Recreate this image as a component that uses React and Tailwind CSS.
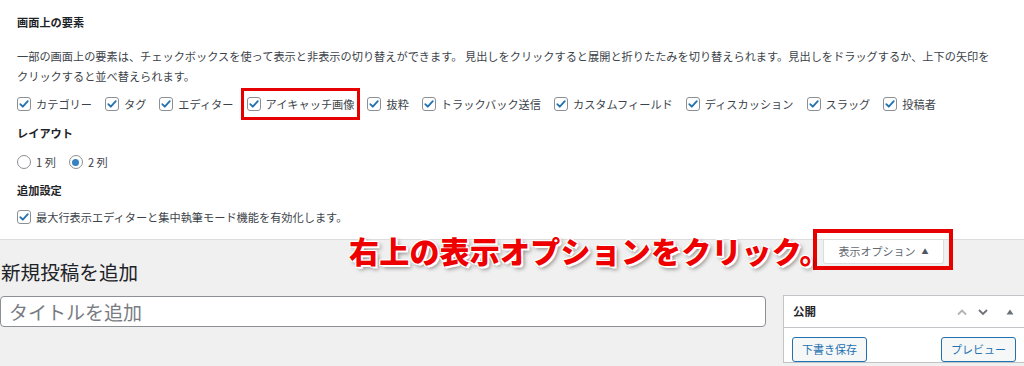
import React from "react";

function Check() {
  return (
    <span className="w-[14px] h-[14px] shrink-0 rounded-[3px] border border-[#8c8f94] bg-white flex items-center justify-center">
      <svg width="12" height="12" viewBox="0 0 12 12">
        <path d="M2.3 6.1 L4.8 8.7 L9.8 3.1" fill="none" stroke="#2271b1" strokeWidth="1.8" strokeLinecap="round" strokeLinejoin="round" />
      </svg>
    </span>
  );
}

function Radio({ on }) {
  return (
    <span className="w-[14px] h-[14px] shrink-0 rounded-full border border-[#8c8f94] bg-white flex items-center justify-center">
      {on && <span className="w-[7px] h-[7px] rounded-full bg-[#3582c4]" />}
    </span>
  );
}

const items = [
  "カテゴリー",
  "タグ",
  "エディター",
  "アイキャッチ画像",
  "抜粋",
  "トラックバック送信",
  "カスタムフィールド",
  "ディスカッション",
  "スラッグ",
  "投稿者",
];

export default function App() {
  return (
    <div className="relative w-[1024px] h-[366px] overflow-hidden bg-[#f0f0f1] font-['Noto_Sans_CJK_JP','Liberation_Sans',sans-serif]">
      <div className="bg-white h-[240px] border-b border-[#dcdcde] px-[17px] pt-[12px] text-[11.2px] text-[#3c434a]">
        <h5 className="leading-[20px] font-bold text-[#1d2327]">画面上の要素</h5>
        <p className="mt-[14px] leading-[20px] whitespace-nowrap">
          一部の画面上の要素は、チェックボックスを使って表示と非表示の切り替えができます。 見出しをクリックすると展開と折りたたみを切り替えられます。見出しをドラッグするか、上下の矢印を
          <br />
          クリックすると並べ替えられます。
        </p>
        <div className="mt-[8px] flex gap-[13px] leading-[20px] whitespace-nowrap">
          {items.map((t) => (
            <label key={t} className="relative flex items-center gap-[5px]">
              <Check />
              <span>{t}</span>
              {t === "アイキャッチ画像" && (
                <span className="absolute -inset-[6px] border-[3px] border-[#e60000] pointer-events-none" />
              )}
            </label>
          ))}
        </div>
        <h5 className="mt-[9px] leading-[20px] font-bold text-[#1d2327]">レイアウト</h5>
        <div className="mt-[9px] flex gap-[13px] leading-[20px]">
          <label className="flex items-center gap-[5px]">
            <Radio />
            <span>1 列</span>
          </label>
          <label className="flex items-center gap-[5px]">
            <Radio on />
            <span>2 列</span>
          </label>
        </div>
        <h5 className="mt-[8px] leading-[20px] font-bold text-[#1d2327]">追加設定</h5>
        <label className="mt-[7px] flex items-center gap-[5px] leading-[20px]">
          <Check />
          <span>最大行表示エディターと集中執筆モード機能を有効化します。</span>
        </label>
      </div>

      <div className="flex items-start justify-between pr-[80px]">
        <h1 className="pt-[22px] pl-[1px] leading-[20px] text-[19.6px] text-[#1d2327] font-normal">新規投稿を追加</h1>
        <div className="relative">
          <div className="h-[24px] w-[121px] bg-white border border-t-0 border-[#dcdcde] rounded-b-[3px] text-[11px] text-[#646970] flex items-center justify-center gap-[6px]">
            <span>表示オプション</span>
            <span className="text-[7px] text-[#50575e]">▲</span>
          </div>
          <span className="absolute left-[-10px] right-[-9px] top-[-11px] bottom-[-6px] border-[4px] border-[#e60000] pointer-events-none" />
        </div>
      </div>

      <div className="mt-[14px] flex gap-[17px]">
        <input
          className="w-[766px] h-[31px] shrink-0 bg-white border border-[#8c8f94] rounded-[4px] px-[8px] text-[19px] text-[#1d2327] placeholder:text-[#787c82] outline-none"
          placeholder="タイトルを追加"
        />
        <div className="w-[243px] shrink-0 -mt-[1px] bg-white border border-[#c3c4c7]">
          <div className="h-[32px] border-b border-[#c3c4c7] flex items-center pl-[9px] pr-[3px]">
            <span className="font-bold text-[11.5px] text-[#1d2327]">公開</span>
            <div className="ml-auto flex items-center">
              <span className="w-[20px] h-[20px] mr-[1px] flex items-center justify-center">
                <svg width="12" height="12" viewBox="0 0 12 12">
                  <polyline points="2,8.5 6,4.5 10,8.5" fill="none" stroke="#b0b3b7" strokeWidth="1.8" />
                </svg>
              </span>
              <span className="w-[20px] h-[20px] mr-[5px] flex items-center justify-center">
                <svg width="12" height="12" viewBox="0 0 12 12">
                  <polyline points="2,4 6,8 10,4" fill="none" stroke="#6d7278" strokeWidth="1.8" />
                </svg>
              </span>
              <span className="w-[24px] h-[20px] flex items-center justify-center">
                <svg width="8" height="6" viewBox="0 0 8 6">
                  <polygon points="4,0.5 7.5,5.5 0.5,5.5" fill="#6d7278" />
                </svg>
              </span>
            </div>
          </div>
          <div className="pl-[8px] pr-[9px] pt-[9px] flex justify-between text-[11px] text-[#2271b1]">
            <span className="h-[25px] w-[75px] border border-[#2271b1] rounded-[3px] bg-[#f6f7f7] flex items-center justify-center">下書き保存</span>
            <span className="h-[25px] w-[75px] border border-[#2271b1] rounded-[3px] bg-[#f6f7f7] flex items-center justify-center">プレビュー</span>
          </div>
        </div>
      </div>

      <div className="absolute left-[349px] top-[232px] leading-[36px] text-[30px] font-black text-[#ee0000] tracking-[0.2px] whitespace-nowrap [text-shadow:1px_1px_0_#fff,-1px_-1px_0_#fff,1px_-1px_0_#fff,-1px_1px_0_#fff,2px_2px_0_#fff,3px_3px_4px_rgba(0,0,0,0.45)]">
        右上の表示オプションをクリック。
      </div>
    </div>
  );
}
